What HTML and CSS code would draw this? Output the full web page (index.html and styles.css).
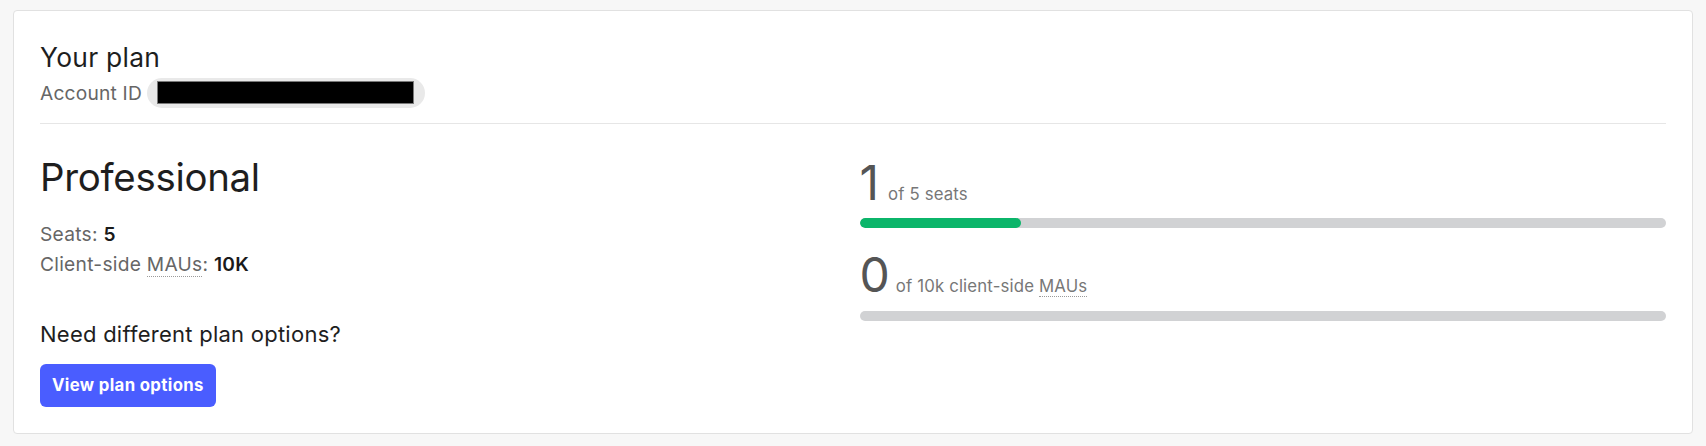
FILE: index.html
```html
<!DOCTYPE html>
<html lang="en">
<head>
<meta charset="utf-8">
<title>Your plan</title>
<link rel="stylesheet" href="styles.css">
</head>
<body>
<div class="page">
  <section class="card">
    <header class="card-head">
      <h2 class="title">Your plan</h2>
      <div class="account">
        <span class="account-label">Account ID</span>
        <span class="pill"><span class="redacted"></span></span>
      </div>
    </header>
    <hr class="divider">
    <div class="plan-body">
      <div class="plan-info">
        <h1 class="plan-name">Professional</h1>
        <ul class="limits">
          <li><span class="label">Seats:</span> <strong class="value">5</strong></li>
          <li><span class="label">Client-side <span class="term">MAUs</span>:</span> <strong class="value">10K</strong></li>
        </ul>
        <p class="need">Need different plan options?</p>
        <button class="btn-primary" type="button">View plan options</button>
      </div>
      <div class="usage">
        <div class="meter">
          <div class="meter-head">
            <span class="meter-count meter-count-one">1</span>
            <span class="meter-of">of 5 seats</span>
          </div>
          <div class="bar"><div class="bar-fill" style="width:20%"></div></div>
        </div>
        <div class="meter">
          <div class="meter-head">
            <span class="meter-count">0</span>
            <span class="meter-of">of 10k client-side <span class="term">MAUs</span></span>
          </div>
          <div class="bar"><div class="bar-fill" style="width:0%"></div></div>
        </div>
      </div>
    </div>
  </section>
</div>
</body>
</html>
```

FILE: styles.css
```css
* { box-sizing: border-box; }

body {
  margin: 0;
  background: #f7f7f7;
  font-family: Inter, "Noto Sans", sans-serif;
  color: #222;
}

.page {
  padding: 10px 13px 12px;
}

.card {
  background: #fff;
  border: 1px solid #e1e1e1;
  border-radius: 4px;
  padding: 0 26px 26px;
}

.card-head {
  padding-top: 31px;
}

.title {
  margin: 0;
  font-size: 26.4px;
  font-weight: 400;
  line-height: 30px;
  letter-spacing: 0.28px;
  color: #1e1e1e;
}

.account {
  display: flex;
  align-items: center;
  gap: 5px;
  margin-top: 6px;
}

.account-label {
  font-size: 19.2px;
  line-height: 30px;
  letter-spacing: 0.2px;
  color: #666;
}

.pill {
  display: inline-flex;
  height: 30px;
  padding: 3px 11px 4px 10px;
  background: #e9e9e9;
  border-radius: 15px;
}

.redacted {
  display: block;
  width: 257px;
  height: 23px;
  background: #000;
  border: 1px solid #7a7a7a;
}

.divider {
  margin: 15px 0 0;
  height: 0;
  border: 0;
  border-top: 1px solid #e6e6e6;
}

.plan-body {
  display: grid;
  grid-template-columns: 1fr 1fr;
  column-gap: 13px;
  margin-top: 30px;
}

.plan-name {
  margin: 0;
  font-size: 38.4px;
  font-weight: 400;
  line-height: 46px;
  letter-spacing: -0.28px;
  color: #1e1e1e;
}

.limits {
  list-style: none;
  margin: 18.7px 0 0;
  padding: 0;
  font-size: 19.2px;
  line-height: 30px;
  letter-spacing: 0.26px;
}

.label {
  color: #666;
}

.value {
  font-weight: 600;
  color: #1a1a1a;
}

.term {
  border-bottom: 1px dotted #9a9a9a;
}

.need {
  margin: 42.8px 0 0;
  font-size: 22px;
  line-height: 26px;
  letter-spacing: 0.25px;
  color: #1e1e1e;
}

.btn-primary {
  display: block;
  margin-top: 16.5px;
  height: 43px;
  padding: 0 12px;
  border: 0;
  border-radius: 6px;
  background: #4a5dff;
  color: #fff;
  font-family: Inter, "Noto Sans", sans-serif;
  font-size: 16.8px;
  font-weight: 700;
  letter-spacing: 0.02em;
}

.usage {
  padding-top: 4.5px;
}

.meter + .meter {
  margin-top: 23px;
}

.meter-head {
  display: flex;
  align-items: baseline;
  gap: 6px;
}

.meter-count {
  font-size: 48px;
  line-height: 48px;
  color: #555;
}

.meter-count-one {
  margin-right: 3px;
}

.meter-of {
  font-size: 16.8px;
  line-height: 20px;
  letter-spacing: 0.15px;
  color: #777;
}

.bar {
  margin-top: 11.5px;
  height: 10px;
  background: #d1d2d4;
  border-radius: 5px;
  overflow: hidden;
}

.bar-fill {
  height: 100%;
  background: #0bb56a;
  border-radius: 5px;
}
```
